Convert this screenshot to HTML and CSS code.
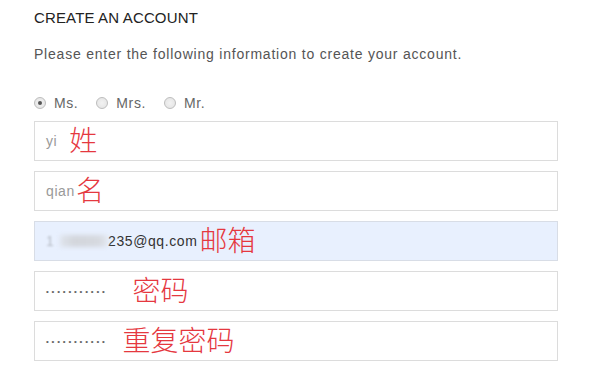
FILE: index.html
```html
<!DOCTYPE html>
<html>
<head>
<meta charset="utf-8">
<link rel="stylesheet" href="styles.css">
</head>
<body>
<div class="page">
  <h1 class="title">CREATE AN ACCOUNT</h1>
  <p class="intro">Please enter the following information to create your account.</p>
  <div class="radios">
    <span class="radio"><span class="dot on"></span>Ms.</span>
    <span class="radio"><span class="dot"></span>Mrs.</span>
    <span class="radio"><span class="dot"></span>Mr.</span>
  </div>
  <div class="fields">
    <div class="field"><span class="val">yi</span><span class="note n1">姓</span></div>
    <div class="field"><span class="val">qian</span><span class="note n2">名</span></div>
    <div class="field auto"><span class="mask"><span class="faint">1</span><span class="smear"></span></span><span class="val dark">235@qq.com</span><span class="note n3">邮箱</span></div>
    <div class="field"><span class="dots">•••••••••••</span><span class="note n4">密码</span></div>
    <div class="field"><span class="dots">•••••••••••</span><span class="note n5">重复密码</span></div>
  </div>
</div>
</body>
</html>
```
FILE: styles.css
```css
html, body { margin: 0; padding: 0; background: #fff; }
.page {
  padding: 9px 0 0 34px;
  width: 524px;
  font-family: "Liberation Sans", Arial, sans-serif;
}
.title {
  margin: 0;
  font-size: 15px;
  font-weight: normal;
  letter-spacing: 0.15px;
  color: #222;
  line-height: 18px;
}
.intro {
  margin: 19px 0 0 0;
  font-size: 14px;
  letter-spacing: 0.78px;
  color: #555;
  line-height: 16px;
}
.radios {
  margin-top: 33px;
  display: flex;
  gap: 18px;
  font-size: 14px;
  color: #666;
  line-height: 16px;
  letter-spacing: 0.6px;
}
.radio { display: flex; align-items: center; gap: 8px; }
.dot {
  width: 10px; height: 10px;
  border: 1px solid #bdbdbd;
  border-radius: 50%;
  background: radial-gradient(circle, #f2f2f2 0, #e2e2e2 100%);
  display: flex; align-items: center; justify-content: center;
}
.dot.on::after {
  content: "";
  width: 4px; height: 4px; border-radius: 50%;
  background: #555;
}
.fields {
  margin-top: 10px;
  display: flex;
  flex-direction: column;
  gap: 10px;
}
.field {
  height: 38px;
  border: 1px solid #dcdcdc;
  display: flex;
  align-items: center;
  padding-left: 11px;
  background: #fff;
}
.field.auto { background: #e8f0fe; border-color: #d8dde6; }
.val { font-size: 14px; color: #999; letter-spacing: 0.6px; }
.val.dark { color: #333; }
.mask {
  width: 62px;
  display: flex;
  align-items: center;
  font-size: 14px;
}
.faint { color: #555; opacity: 0.35; filter: blur(0.8px); margin-right: 6px; }
.smear {
  flex: 1;
  height: 12px;
  background: linear-gradient(90deg, #dfe4ec 0%, #d3d6dc 30%, #d6d9df 80%, #e3e8f0 100%);
  filter: blur(2px);
}
.dots { font-size: 8px; color: #666; letter-spacing: 2.8px; }
.note {
  color: #e5383f;
  font-family: "Noto Sans CJK SC", sans-serif;
  font-size: 28px;
  line-height: 32px;
  font-weight: 300;
  margin-bottom: 4px;
}
.n1 { margin-left: 12px; }
.n2 { margin-left: 1px; }
.n3 { margin-left: 2px; }
.n4 { margin-left: 25px; }
.n5 { margin-left: 15px; }
```
